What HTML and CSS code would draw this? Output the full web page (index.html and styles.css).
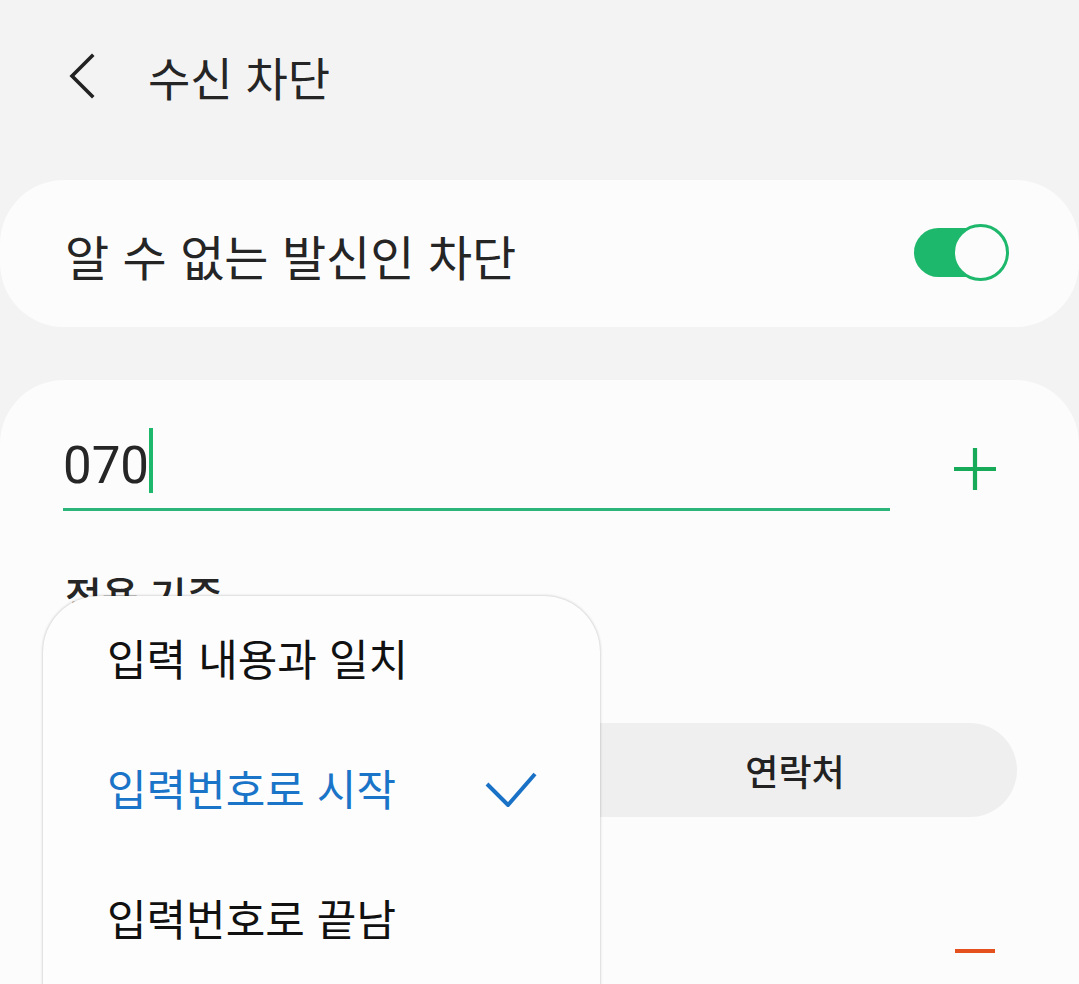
FILE: index.html
```html
<!DOCTYPE html>
<html lang="ko">
<head>
<meta charset="utf-8">
<title>수신 차단</title>
<link rel="stylesheet" href="styles.css">
</head>
<body>
<div class="screen">
  <header class="appbar">
    <svg class="back" width="40" height="50" viewBox="0 0 40 50" aria-hidden="true">
      <polyline points="27,5 7,25 27,45" fill="none" stroke="#222" stroke-width="3.6" stroke-linecap="square" stroke-linejoin="miter"/>
    </svg>
    <h1 class="title">수신 차단</h1>
  </header>

  <section class="card switch-card">
    <span class="switch-label">알 수 없는 발신인 차단</span>
    <div class="toggle">
      <div class="track"></div>
      <div class="thumb"></div>
    </div>
  </section>

  <section class="card block-card">
    <div class="input-row">
      <div class="field">
        <span class="value">070</span><span class="caret"></span>
      </div>
      <svg class="plus" width="44" height="44" viewBox="0 0 44 44" aria-hidden="true">
        <path d="M22 1V43M1 22H43" stroke="#17aa58" stroke-width="4.2" fill="none"/>
      </svg>
    </div>
    <div class="label">적용 기준</div>
    <div class="segmented">
      <div class="seg"></div>
      <div class="seg">연락처</div>
    </div>
    <div class="remove-row"><span class="minus"></span></div>
  </section>

  <div class="menu">
    <div class="menu-item">입력 내용과 일치</div>
    <div class="menu-item selected">입력번호로 시작
      <svg class="check" width="52" height="36" viewBox="0 0 52 36" aria-hidden="true">
        <polyline points="2,13 23,34 50,3" fill="none" stroke="#1a72c6" stroke-width="4"/>
      </svg>
    </div>
    <div class="menu-item">입력번호로 끝남</div>
  </div>
</div>
</body>
</html>
```

FILE: styles.css
```css
html, body {
  margin: 0;
  padding: 0;
  background: #f3f3f3;
}

.screen {
  position: relative;
  width: 1079px;
  height: 984px;
  overflow: hidden;
  background: #f3f3f3;
  font-family: "Noto Sans CJK KR", "Noto Sans", sans-serif;
  color: #252525;
}

.appbar {
  height: 180px;
  display: flex;
  align-items: flex-start;
  box-sizing: border-box;
  padding-top: 51px;
  padding-left: 65px;
}

.back {
  display: block;
}

.title {
  margin: 0 0 0 43px;
  font-size: 46px;
  font-weight: 400;
  line-height: 50px;
}

.card {
  background: #fcfcfc;
  border-radius: 64px;
}

.switch-card {
  height: 147px;
  display: flex;
  align-items: center;
  justify-content: space-between;
  padding: 0 70px 0 65px;
}

.switch-label {
  font-size: 48px;
  line-height: 60px;
  margin-top: 2px;
}

.toggle {
  position: relative;
  width: 95px;
  height: 57px;
  margin-top: -2px;
}

.track {
  position: absolute;
  left: 0;
  top: 4px;
  width: 80px;
  height: 49px;
  border-radius: 25px;
  background: #1db86b;
}

.thumb {
  position: absolute;
  right: 0;
  top: 0;
  width: 57px;
  height: 57px;
  box-sizing: border-box;
  border: 3px solid #1db86b;
  border-radius: 50%;
  background: #fcfcfc;
}

.block-card {
  margin-top: 53px;
  height: 700px;
  border-radius: 64px 64px 0 0;
  padding: 48px 82px 0 63px;
}

.input-row {
  display: flex;
  align-items: flex-start;
}

.field {
  flex: 1;
  height: 80px;
  display: flex;
  align-items: flex-start;
  border-bottom: 3px solid #2cb57b;
}

.value {
  font-family: Roboto, "Noto Sans", sans-serif;
  font-size: 51px;
  line-height: 65px;
  margin-top: 5px;
  color: #262626;
}

.caret {
  width: 4px;
  height: 65px;
  margin-left: 0;
  background: #1db86b;
}

.plus {
  display: block;
  margin: 19px 0 0 63px;
}

.label {
  margin-top: 60px;
  font-size: 40px;
  font-weight: 500;
  line-height: 46px;
  color: #252525;
  padding-left: 2px;
}

.segmented {
  margin-top: 106px;
  height: 94px;
  border-radius: 47px;
  background: #efefef;
  display: grid;
  grid-template-columns: 510px 1fr;
  margin-right: -20px;
}

.seg {
  display: flex;
  align-items: center;
  justify-content: center;
  font-size: 36px;
  font-weight: 500;
  color: #222;
}

.remove-row {
  display: flex;
  justify-content: flex-end;
  margin-top: 132px;
  padding-right: 2px;
}

.minus {
  display: block;
  width: 40px;
  height: 4px;
  background: #e5501f;
}

.menu {
  position: absolute;
  left: 43px;
  top: 596px;
  width: 557px;
  height: 460px;
  box-sizing: border-box;
  background: #fdfdfd;
  border-radius: 56px;
  box-shadow: 0 0 3px rgba(0, 0, 0, 0.28);
  padding: 0 63px 0 64px;
}

.menu-item {
  height: 130px;
  box-sizing: border-box;
  padding-bottom: 9px;
  display: flex;
  align-items: center;
  justify-content: space-between;
  font-size: 43px;
  color: #111;
}

.menu-item.selected {
  color: #1a74c8;
}

.check {
  display: block;
  margin-top: 5px;
}
```
